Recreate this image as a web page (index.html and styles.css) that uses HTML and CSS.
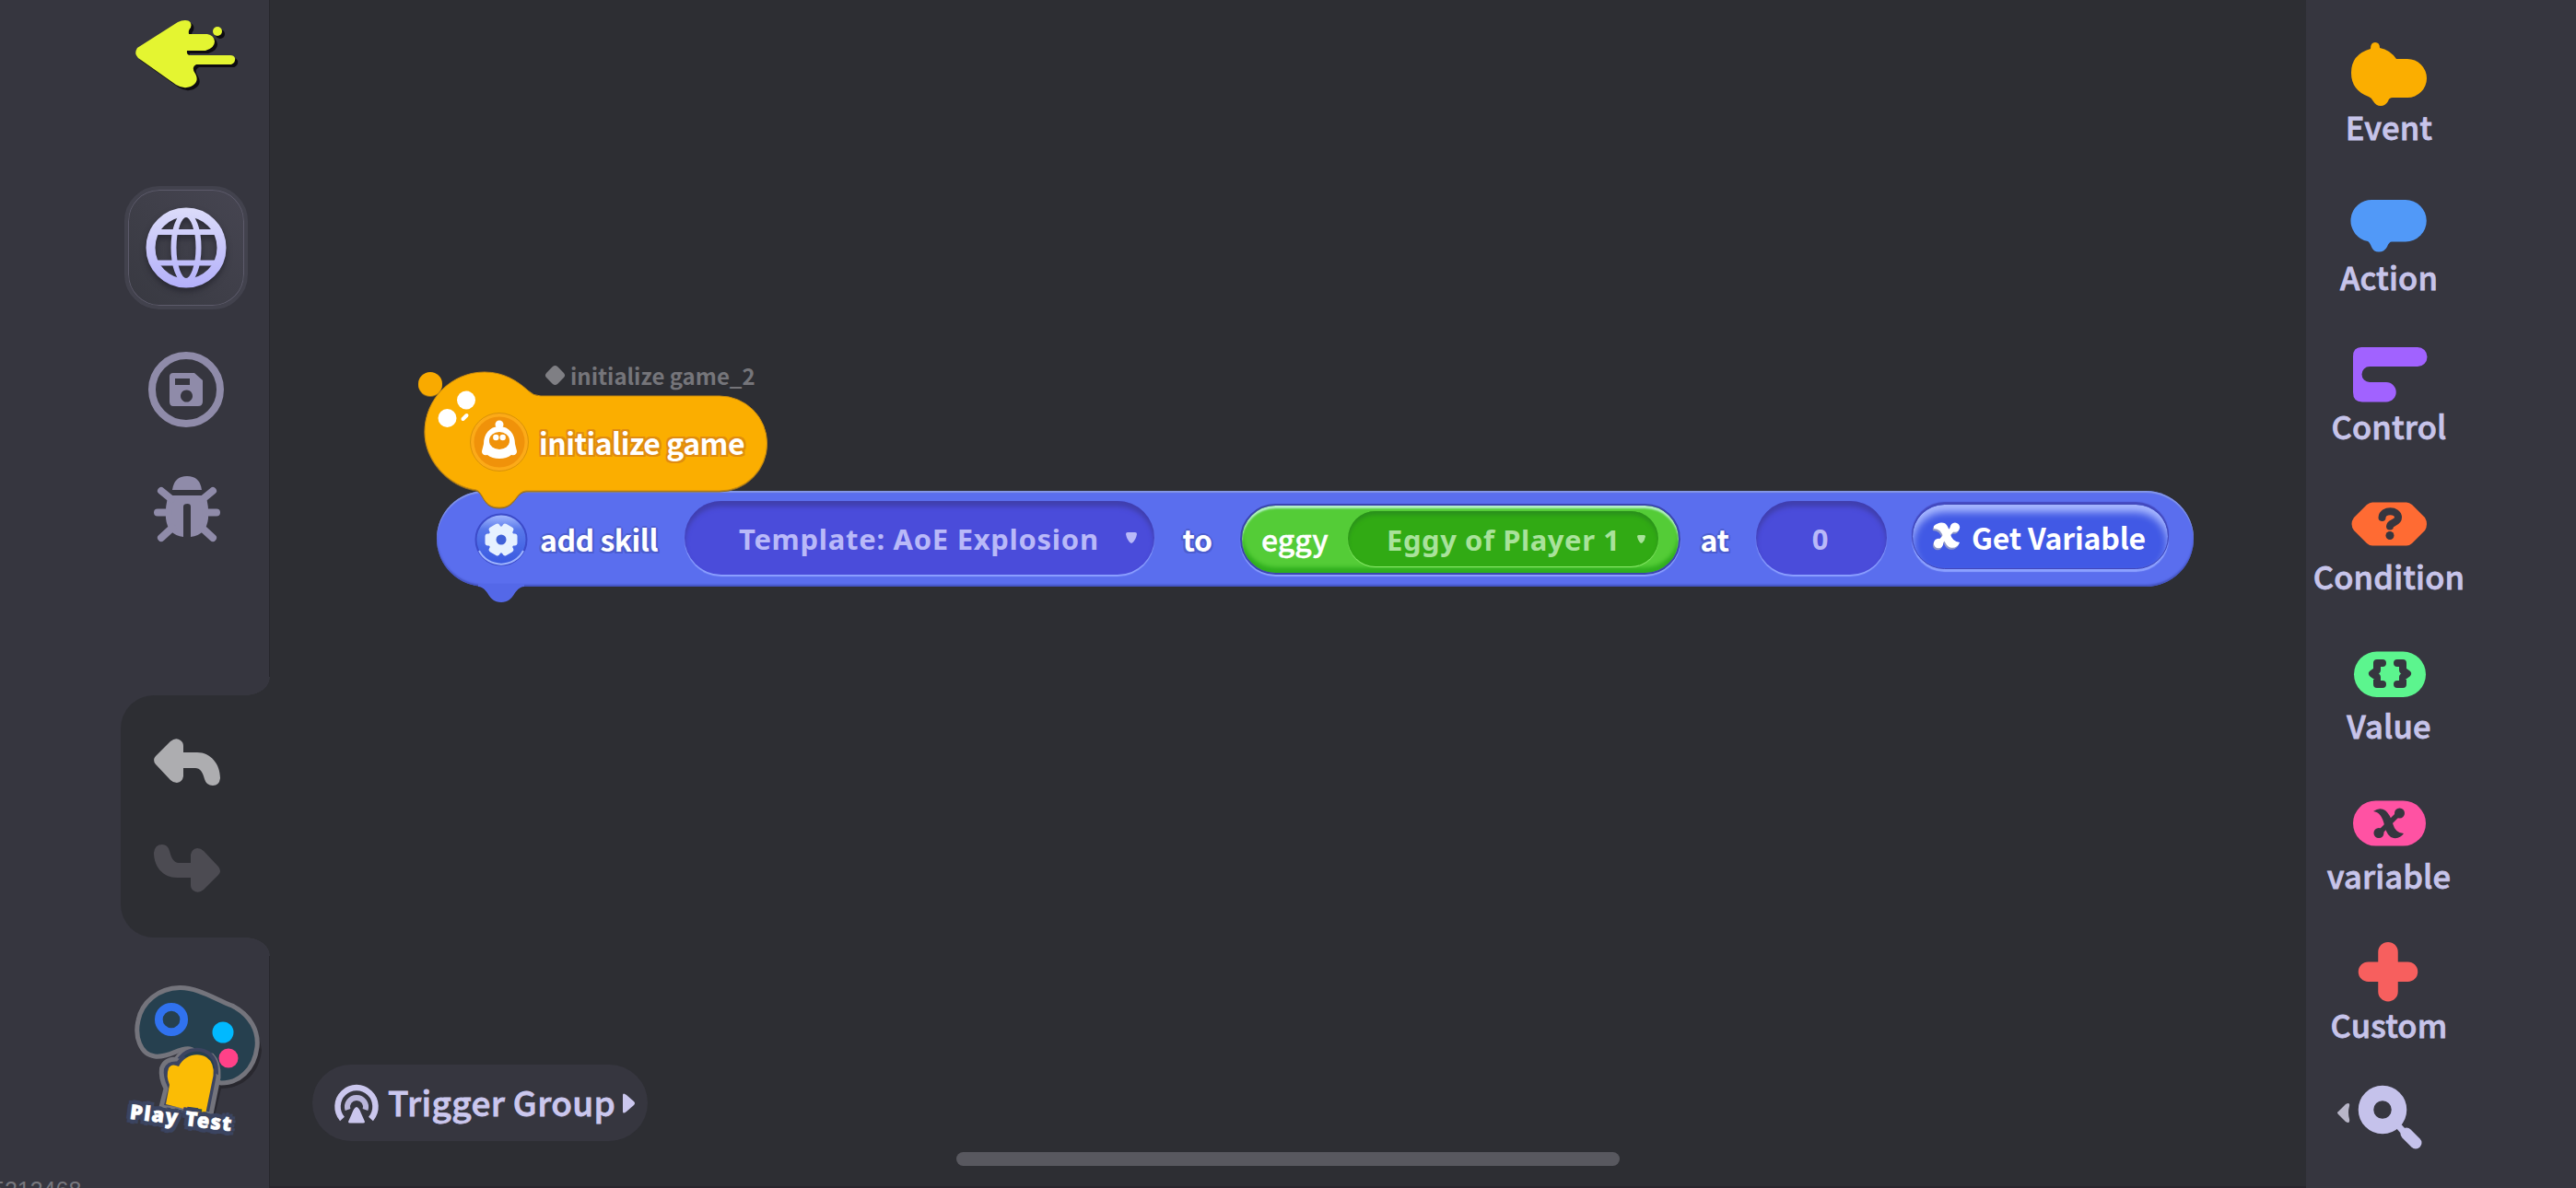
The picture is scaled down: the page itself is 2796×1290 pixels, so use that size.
FILE: index.html
```html
<!DOCTYPE html>
<html lang="en">
<head>
    <meta charset="UTF-8">
    <meta name="viewport" content="width=device-width, initial-scale=1.0">
    <title>Trigger Editor</title>
    <link rel="stylesheet" href="styles.css">
</head>
<body>
    <div class="editor">
        <aside class="left-bar">
            <svg class="back" viewBox="0 0 112 80">
                <g fill="#0d0b10" transform="translate(3 3)">
                    <path d="M2 30 Q-2 36 3 41 L44 70 Q52 75 60 72 Q70 67 65 58 Q60 51 66 48 L104 48 Q109 46 108 41 Q107 38 103 38 L60 38 Q55 38 56 33 L76 33 Q86 30 86 23 Q85 16 78 15 L58 15 Q57 11 60 8 Q62 0 54 0 Q50 0 46 2 Z"/>
                    <circle cx="89" cy="12" r="5"/>
                </g>
                <path fill="#e4f531" d="M2 30 Q-2 36 3 41 L44 70 Q52 75 60 72 Q70 67 65 58 Q60 51 66 48 L104 48 Q109 46 108 41 Q107 38 103 38 L60 38 Q55 38 56 33 L76 33 Q86 30 86 23 Q85 16 78 15 L58 15 Q57 11 60 8 Q62 0 54 0 Q50 0 46 2 Z"/>
                <circle cx="89" cy="12" r="5" fill="#e4f531"/>
            </svg>

            <div class="globe-btn">
                <svg class="globe" viewBox="0 0 88 88">
                    <defs>
                        <linearGradient id="globeFill" gradientUnits="userSpaceOnUse" x1="0" y1="0" x2="0" y2="88">
                            <stop offset="0" stop-color="#dcdcfa"/>
                            <stop offset="1" stop-color="#b3b0fa"/>
                        </linearGradient>
                    </defs>
                    <g fill="none" stroke="url(#globeFill)">
                        <circle cx="44" cy="44" r="38.500" stroke-width="10"/>
                        <ellipse cx="44" cy="44" rx="13.500" ry="36" stroke-width="6"/>
                        <path d="M12 27 H76 M12 60.500 H76" stroke-width="6"/>
                    </g>
                </svg>
            </div>

            <svg class="save" viewBox="0 0 84 84">
                <circle cx="42" cy="42" r="37" fill="none" stroke="#8f8ba9" stroke-width="8"/>
                <path fill="#8f8ba9" fill-rule="evenodd" d="M28 24 H51 L60 32 V55 Q60 60 55 60 H28 Q24 60 24 55 V28 Q24 24 28 24 Z M30 30 V37 H46 V30 Z M42.500 42.500 a6.500 6.500 0 1 0 0.010 0 Z"/>
            </svg>

            <svg class="bug" viewBox="0 0 72 72">
                <g fill="#8f8ba9">
                    <path d="M20 15 Q22 0 36 0 Q50 0 52 15 Z"/>
                    <path d="M16 21 H56 Q60 32 59 46 Q57 64 40 66 V33 Q40 30 36.500 30 Q32 30 32 33 V66 Q15 64 13 46 Q12 32 16 21 Z"/>
                </g>
                <path fill="none" stroke="#8f8ba9" stroke-width="8" stroke-linecap="round" d="M8 16 L19 25 M64 16 L53 25 M4 39.500 H16 M68 39.500 H56 M8 67 L20 56 M64 67 L52 56"/>
            </svg>

            <div class="history">
                <svg class="undo" viewBox="0 0 72 52">
                    <path fill="#adadb0" d="M2 19 L18 3 Q24 -2 29 2 Q32 4 32 8 V15 H47 C62 15 72 28 72 43 Q71 51 64 51 Q57 51 55 44 C53 36 50 32 45 32 H32 V41 Q31 47 25 48 Q21 48 18 45 L2 28 Q-2 23 2 19 Z"/>
                </svg>
                <svg class="redo" viewBox="0 0 72 52">
                    <path fill="#4c4b52" d="M70 33 L54 49 Q48 54 43 50 Q40 48 40 44 V36 H25 C10 36 0 24 0 9 Q1 0 9 0 Q15 0 17 7 C19 15 22 20 27 20 H40 V11 Q41 5 47 4 Q51 4 54 7 L70 24 Q74 29 70 33 Z"/>
                </svg>
            </div>

            <div class="play-test">
                <svg viewBox="0 0 150 160">
                    <path fill="#29282f" d="M106 112 C130 112 148 95 150 70 L146 50 L100 100 L92 146 L98 146 Z"/>
                    <path fill="#26404f" stroke="#74747c" stroke-width="5" d="M61 2.500 C80 2 100 15 118 22 C138 32 147 50 145 67 C142 92 125 106 106 106 C96 104 86 72 72 69 C60 67 50 79 34 77 C18 75 12 55 16 38 C20 18 38 3 61 2.500 Z"/>
                    <path fill="#3b4460" stroke="#74747c" stroke-width="5" d="M41 132 L46 112 Q40 100 41.500 90 Q45 80 57 80 Q61 75 66 72 L96 76 Q104 84 103 100 L95 140 Z"/>
                    <path fill="#26404f" stroke="#3b4460" stroke-width="4" d="M62 78 C70 68 86 67 95 76 Q101 82 101 94 L90 88 Z"/>
                    <path fill="#fbbc05" d="M46 129 L50 108 Q46 98 49 90 Q52 84 60 88 C66 76 80 72 90 78 Q99 84 97.500 98 L89 140 Z"/>
                    <circle cx="52" cy="37" r="13.700" fill="none" stroke="#3072ef" stroke-width="8.700"/>
                    <circle cx="108" cy="51" r="11.500" fill="#00b9ff"/>
                    <circle cx="114" cy="79" r="10.500" fill="#ff4188"/>
                </svg>
                <span class="play-label">Play Test</span>
            </div>

            <span class="uid">5213468</span>
        </aside>

        <main class="canvas">
            <!-- Event block -->
            <div class="node event-node">
                <svg class="event-shape" viewBox="0 0 382 156">
                    <circle cx="14" cy="17" r="13" fill="#f9aa00"/>
                    <path fill="#fbae00" stroke="#c98a10" stroke-width="1" d="M73 4 C94 4 109 14 120 24 Q126 30 134 30 H328 A51.500 51.500 0 0 1 328 133 H118 C106 134 107 151 89 151 C71 151 73 136 64 132 C34 128 8 100 8 69 C8 33 37 4 73 4 Z"/>
                    <circle cx="53" cy="34.500" r="10" fill="#fff"/>
                    <circle cx="32.500" cy="54" r="10" fill="#fff"/>
                    <path d="M49.500 55 L53.500 51" stroke="#fff" stroke-width="4" stroke-linecap="round"/>
                    <circle cx="89" cy="80" r="31.500" fill="#fcaa18" stroke="#d99208" stroke-width="1"/>
                    <circle cx="89" cy="80" r="27.500" fill="#f0920a"/>
                    <g fill="#fff">
                        <circle cx="89" cy="61" r="4.500"/>
                        <path d="M89 63 C100 63 106 72 106 82 Q107 86 108 90 Q108 95 102 94 Q97 98 89 98 Q81 98 76 94 Q70 95 70 90 Q71 86 72 82 C72 72 78 63 89 63 Z"/>
                    </g>
                    <ellipse cx="89" cy="78.500" rx="11" ry="9.500" fill="#f0920a"/>
                    <circle cx="85.300" cy="75" r="3.200" fill="#fff"/>
                    <circle cx="92.700" cy="75" r="3.200" fill="#fff"/>
                </svg>
                <div class="node-caption"><i class="diamond"></i>initialize game_2</div>
                <div class="event-title">initialize game</div>
            </div>

            <!-- Action block -->
            <div class="node action-node">
                <svg class="tab" viewBox="0 0 50 22">
                    <path fill="#5468e8" d="M0 0 H50 V3 C38 4 40 20 25 20 C10 20 12 4 0 3 Z"/>
                </svg>
                <svg class="gear" viewBox="0 0 58 58">
                    <defs>
                        <linearGradient id="gearFill" x1="0" y1="0" x2="0" y2="1">
                            <stop offset="0" stop-color="#a6bbff"/>
                            <stop offset=".3" stop-color="#5878ea"/>
                            <stop offset="1" stop-color="#3858e0"/>
                        </linearGradient>
                    </defs>
                    <circle cx="29" cy="29" r="27.500" fill="url(#gearFill)" stroke="#3c4bc9" stroke-width="2"/>
                    <path d="M5 41 A27 27 0 0 0 53 41" fill="none" stroke="#9db4ff" stroke-width="2"/>
                    <g fill="#e6f1ff">
                        <circle cx="29" cy="29" r="14.500"/>
                        <rect x="22.500" y="11.500" width="13" height="35" rx="3" transform="rotate(30 29 29)"/>
                        <rect x="22.500" y="11.500" width="13" height="35" rx="3" transform="rotate(90 29 29)"/>
                        <rect x="22.500" y="11.500" width="13" height="35" rx="3" transform="rotate(150 29 29)"/>
                    </g>
                    <circle cx="29" cy="29" r="5.500" fill="#3f60d8"/>
                </svg>
                <span class="word add-skill">add skill</span>
                <div class="slot template">
                    <span>Template: AoE Explosion</span>
                    <svg class="caret" viewBox="0 0 12 12"><path d="M2 0 H10 Q12 0 12 2 Q11 8 7 11.500 Q6 12 5 11.500 Q1 8 0 2 Q0 0 2 0 Z"/></svg>
                </div>
                <span class="word to">to</span>
                <div class="eggy">
                    <span class="eggy-name">eggy</span>
                    <div class="eggy-slot">
                        <span>Eggy of Player 1</span>
                        <svg class="caret" viewBox="0 0 12 12"><path d="M2 0 H10 Q12 0 12 2 Q11 8 7 11.500 Q6 12 5 11.500 Q1 8 0 2 Q0 0 2 0 Z"/></svg>
                    </div>
                </div>
                <span class="word at">at</span>
                <div class="slot number">0</div>
                <div class="get-variable">
                    <svg class="x-icon" viewBox="0 0 34 32">
                        <path fill="#fff" d="M2 5 Q9 -1 15 2 Q19 5 21 14 Q23 23 32 24 Q29 31 22 30 Q16 29 13 19 Q11 8 2 8 Z"/>
                        <path d="M26 6 L8 25" stroke="#fff" stroke-width="6"/>
                        <circle cx="26.500" cy="6.500" r="5.500" fill="#fff"/>
                        <circle cx="7.500" cy="25" r="5.500" fill="#fff"/>
                    </svg>
                    <span>Get Variable</span>
                </div>
            </div>

            <button class="trigger-group">
                <svg class="signal" viewBox="0 0 48 44">
                    <path d="M8.500 39 A20.500 20.500 0 1 1 39.500 39" fill="none" stroke="#cbc7ee" stroke-width="6.500"/>
                    <path d="M14.500 29 A10 10 0 1 1 33.500 29" fill="none" stroke="#b9b5da" stroke-width="6"/>
                    <path d="M24 26 Q27 27 29 33 L33 42 Q33 43.500 31 43.500 H17 Q15 43.500 15 42 L19 33 Q21 27 24 26 Z" fill="#cbc7ee"/>
                </svg>
                <span>Trigger Group</span>
                <svg class="more" viewBox="0 0 13 22"><path fill="#cbc7ee" d="M0 2 Q0 -1 4 2 L12 9 Q14 11 12 13 L4 20 Q0 23 0 20 Z"/></svg>
            </button>

            <div class="home-bar"></div>
        </main>

        <nav class="right-bar">
            <div class="category">
                <svg viewBox="0 0 100 80"><path fill="#fbae00" d="M30 13 Q30 6 35 6 Q40 6 40 12 Q51 14 58 24 H70 A21 21 0 0 1 70 66 H54 Q50 66 49 70 Q46 75 41 75 Q36 75 33 70 Q31 66 28 65 Q9 58 9 39 Q9 19 30 13 Z"/></svg>
                <span>Event</span>
            </div>
            <div class="category">
                <svg viewBox="0 0 100 80"><path fill="#5199f8" d="M32 14 H68 A22.700 22.700 0 0 1 68 59.500 H53 Q50 59.500 48 65 Q45 70.500 39 70.500 Q33 70.500 31 65 Q29 60 27 59 A22.700 22.700 0 0 1 32 14 Z"/></svg>
                <span>Action</span>
            </div>
            <div class="category">
                <svg viewBox="0 0 100 80"><path fill="#a162ff" d="M20 12 H81 A10.500 10.500 0 0 1 81 33 H29 A8.500 8.500 0 0 0 29 50 H47 A10.700 10.700 0 0 1 47 71.500 H21 Q11 71.500 11 61 V22 Q11 12 20 12 Z"/></svg>
                <span>Control</span>
            </div>
            <div class="category">
                <svg viewBox="0 0 100 80">
                    <path fill="#ff6b33" d="M32 17.500 H69 Q72 17.500 75 20 L89 34 Q93 41 89 48 L75 62 Q72 64.500 69 64.500 H32 Q29 64.500 26 62 L12 48 Q7 41 12 34 L26 20 Q29 17.500 32 17.500 Z"/>
                    <path fill="none" stroke="#36363f" stroke-width="8" stroke-linecap="round" d="M42.500 34 C43 25 60 25 60 34 C60 40 51 39 51 43.500"/>
                    <circle cx="51" cy="53.500" r="4.500" fill="#36363f"/>
                </svg>
                <span>Condition</span>
            </div>
            <div class="category">
                <svg viewBox="0 0 100 80">
                    <rect x="12" y="17.500" width="78" height="49.500" rx="24.700" fill="#5cf58e"/>
                    <path fill="none" stroke="#36363f" stroke-width="8" stroke-linecap="round" stroke-linejoin="round" d="M43 30 H37 V38 L32 41.500 L37 45 V53 H43 M59 30 H65 V38 L70 41.500 L65 45 V53 H59"/>
                </svg>
                <span>Value</span>
            </div>
            <div class="category">
                <svg viewBox="0 0 100 80">
                    <rect x="11" y="16.500" width="79" height="49" rx="24.500" fill="#ff52a3"/>
                    <path fill="#36363f" d="M33 28 Q40 23 46 27 Q51 31 54 41 Q57 52 66 52 Q62 58 55 57 Q48 56 45 43 Q42 29 33 28 Z"/>
                    <path stroke="#36363f" stroke-width="5.500" d="M60 31 L39 52"/>
                    <circle cx="61.500" cy="30" r="5.500" fill="#36363f"/>
                    <circle cx="39" cy="51.500" r="5.500" fill="#36363f"/>
                </svg>
                <span>variable</span>
            </div>
            <div class="category">
                <svg viewBox="0 0 100 80"><path stroke="#f75f5e" stroke-width="21.500" stroke-linecap="round" d="M49 18.700 V61.700 M27.500 40.200 H70.500"/></svg>
                <span>Custom</span>
            </div>
            <svg class="search" viewBox="0 0 100 80">
                <path fill="#b8b6c8" d="M1 28 L9 20 Q14 17 13 22 Q11 29 13 36 Q14 42 9 39 L1 31 Q-1 29 1 28 Z"/>
                <circle cx="49" cy="26" r="18" fill="none" stroke="#c5c2eb" stroke-width="16.500"/>
                <path stroke="#c5c2eb" stroke-width="7" d="M64 41 L72 50"/>
                <path stroke="#c5c2eb" stroke-width="13" stroke-linecap="round" d="M75 52 L85 62"/>
            </svg>
        </nav>
    </div>
</body>
</html>
```
FILE: styles.css
```css
* {
    box-sizing: border-box;
}
body {
    margin: 0;
    background-color: #2d2e33;
    font-family: "Noto Sans CJK SC", "Noto Sans", sans-serif;
    color: #fff;
}
svg {
    display: block;
    overflow: visible;
    flex: none;
}
.editor {
    display: grid;
    grid-template-columns: 293px 1fr 293px;
    width: 2796px;
    height: 1290px;
    overflow: hidden;
}

/* Left bar */
.left-bar {
    display: flex;
    flex-direction: column;
    height: 1290px;
    padding-top: 22px;
    background-color: #36363f;
    border-right: 1px solid #27272c;
    position: relative;
}
.back {
    width: 112px;
    height: 80px;
    margin-left: 147px;
}
.globe-btn {
    display: flex;
    align-items: center;
    justify-content: center;
    width: 134px;
    height: 134px;
    margin: 100px 0 0 135px;
    border: 4px solid #42424d;
    border-radius: 38px;
    background: linear-gradient(45deg, #383941, #464551);
    box-shadow: inset 0 0 0 1px #5c5a6a;
}
.globe {
    width: 88px;
    height: 88px;
    filter: drop-shadow(0 4px 3px rgba(20, 20, 30, 0.5));
}
.save {
    width: 84px;
    height: 84px;
    margin: 45px 0 0 160px;
}
.bug {
    width: 72px;
    height: 72px;
    margin: 52px 0 0 167px;
}
.history {
    display: flex;
    flex-direction: column;
    gap: 63px;
    width: 162px;
    height: 263px;
    margin: 166px 0 0 131px;
    padding: 47px 36px;
    background-color: #2d2e33;
    border-radius: 36px 0 0 36px;
    position: relative;
}
/* Inverted corners that melt the tray into the canvas */
.history::before,
.history::after {
    content: "";
    position: absolute;
    right: 0;
    width: 26px;
    height: 20px;
}
.history::before {
    bottom: 100%;
    background: radial-gradient(ellipse 26px 20px at 0 0, #36363f 98%, #2d2e33 100%);
}
.history::after {
    top: 100%;
    background: radial-gradient(ellipse 26px 20px at 0 100%, #36363f 98%, #2d2e33 100%);
}
.undo,
.redo {
    width: 72px;
    height: 52px;
}
.play-test {
    width: 150px;
    height: 170px;
    margin: 52px 0 0 134px;
    position: relative;
}
.play-test svg {
    width: 150px;
    height: 160px;
}
.play-label {
    position: absolute;
    left: 7px;
    top: 127px;
    width: 118px;
    transform: rotate(7deg);
    font-family: "Noto Sans", sans-serif;
    font-size: 22px;
    font-weight: 900;
    line-height: 32px;
    letter-spacing: 1.3px;
    white-space: nowrap;
    -webkit-text-stroke: 0.6px #fff;
    text-shadow: 5px 0 #3b4460, -5px 0 #3b4460, 0 5px #3b4460, 0 -5px #3b4460, 4px 4px #3b4460, -4px 4px #3b4460, 4px -4px #3b4460, -4px -4px #3b4460;
}
.uid {
    position: absolute;
    left: -9px;
    top: 1278px;
    font-family: "Liberation Sans", sans-serif;
    font-size: 25px;
    line-height: 28px;
    color: #77777d;
}

/* Canvas */
.canvas {
    position: relative;
    border-bottom: 2px solid #28262d;
}
.node {
    position: absolute;
}
.event-node {
    left: 161px;
    top: 400px;
    width: 382px;
    height: 156px;
    z-index: 1;
}
.event-shape {
    position: absolute;
    left: -1px;
    top: 0;
    width: 382px;
    height: 156px;
    filter: drop-shadow(0 1px 0 #8c6a20);
}
.node-caption {
    display: flex;
    align-items: center;
    gap: 8px;
    margin: 0 0 0 138px;
    height: 14px;
    position: relative;
    font-size: 24px;
    font-weight: 700;
    white-space: nowrap;
    color: #75757a;
}
.diamond {
    width: 17px;
    height: 17px;
    margin: 0 0 0 2px;
    border-radius: 4px;
    background-color: #7f7f84;
    transform: rotate(45deg);
    flex: none;
}
.event-title {
    position: relative;
    margin: 42px 0 0 131px;
    font-size: 32px;
    font-weight: 700;
    line-height: 48px;
    letter-spacing: -0.5px;
    white-space: nowrap;
    text-shadow: 2px 0 #e08c10, -2px 0 #e08c10, 0 2px #e08c10, 0 -2px #e08c10, 2px 2px #e08c10, -2px 2px #e08c10, 2px -2px #e08c10, -2px -2px #e08c10;
}
.action-node {
    display: flex;
    align-items: center;
    left: 181px;
    top: 533px;
    width: 1907px;
    height: 104px;
    padding-left: 41px;
    border-radius: 52px;
    background-color: #5a6eee;
    box-shadow: inset 0 2px 1px #8496e6, inset 0 -2px 2px #4352bd;
}
.tab {
    position: absolute;
    left: 45px;
    top: 101px;
    width: 50px;
    height: 22px;
}
.gear {
    width: 58px;
    height: 58px;
    margin-top: 2px;
}
.word {
    font-size: 32px;
    font-weight: 700;
    line-height: 48px;
    letter-spacing: -0.5px;
    text-align: center;
    white-space: nowrap;
    text-shadow: 2px 0 #4c5dcf, -2px 0 #4c5dcf, 0 2px #4c5dcf, 0 -2px #4c5dcf, 2px 2px #4c5dcf, -2px 2px #4c5dcf;
}
.add-skill {
    width: 154px;
    margin-right: 16px;
}
.to {
    width: 93px;
}
.at {
    width: 74px;
    margin-right: 8px;
}
.slot {
    display: flex;
    align-items: center;
    height: 80px;
    margin-top: -2px;
    border-radius: 40px;
    background-color: #4a4cda;
    box-shadow: inset 0 6px 5px #403fae, 0 2px 1px #8ca0ff;
    font-family: "Noto Sans", sans-serif;
    font-size: 31px;
    font-weight: 700;
    color: #b9b9f8;
    white-space: nowrap;
}
.caret {
    fill: currentColor;
}
.template {
    width: 510px;
    padding: 2px 0 0 59px;
}
.template span {
    width: 420px;
    letter-spacing: 0.7px;
}
.template .caret {
    width: 12px;
    height: 12px;
    margin-top: -3px;
}
.eggy {
    display: flex;
    align-items: center;
    width: 478px;
    height: 77px;
    padding-left: 21px;
    border-radius: 39px;
    border: 2px solid #3b45b0;
    background-color: #54cc37;
    box-shadow: inset 0 3px 2px #b5f0c8, inset 0 -6px 4px #2fae1e, 0 2px 1px #8ca0ff;
}
.eggy-name {
    width: 94px;
    font-size: 32px;
    font-weight: 500;
    line-height: 48px;
    -webkit-text-stroke: 0.4px #fff;
}
.eggy-slot {
    display: flex;
    align-items: center;
    width: 337px;
    height: 60px;
    padding-left: 42px;
    border-radius: 30px;
    background-color: #31aa14;
    box-shadow: inset 0 4px 4px #2a901c, 0 1px 1px #90ee70;
    font-family: "Noto Sans", sans-serif;
    font-size: 31px;
    font-weight: 700;
    color: #a9e29b;
    white-space: nowrap;
}
.eggy-slot span {
    width: 272px;
    padding-top: 1px;
    letter-spacing: 0.55px;
}
.eggy-slot .caret {
    width: 9px;
    height: 9px;
}
.number {
    justify-content: center;
    width: 142px;
    padding: 2px 3px 0 0;
}
.get-variable {
    display: flex;
    align-items: center;
    gap: 11px;
    width: 279px;
    height: 71px;
    margin: -5px 0 0 27px;
    padding-left: 21px;
    border-radius: 36px;
    background-color: #4159e5;
    border: 1px solid #4248b8;
    box-shadow: inset 0 8px 8px #a9b9ff, 0 -2px 1px #4449c0, 0 3px 1px #8ba0ff;
    font-size: 32px;
    font-weight: 700;
    line-height: 48px;
    letter-spacing: -0.2px;
    white-space: nowrap;
}
.x-icon {
    width: 32px;
    height: 31px;
    margin-top: -3px;
    filter: drop-shadow(-1px 2px 0 #8f98c8);
}
.trigger-group {
    position: absolute;
    left: 46px;
    top: 1156px;
    display: flex;
    align-items: center;
    width: 364px;
    height: 83px;
    padding: 0 0 0 24px;
    border: none;
    border-radius: 42px;
    background-color: #36363f;
    font-family: inherit;
    font-size: 37px;
    font-weight: 500;
    line-height: 48px;
    color: #cbc7ee;
    white-space: nowrap;
}
.signal {
    width: 48px;
    height: 44px;
    margin-right: 10px;
}
.trigger-group span {
    width: 255px;
    margin-top: -3px;
    text-align: left;
    letter-spacing: 0.35px;
    -webkit-text-stroke: 0.8px #cbc7ee;
}
.more {
    width: 13px;
    height: 22px;
}
.home-bar {
    position: absolute;
    left: 745px;
    top: 1251px;
    width: 720px;
    height: 15px;
    border-radius: 8px;
    background-color: #58585f;
}

/* Right bar */
.right-bar {
    display: flex;
    flex-direction: column;
    height: 1290px;
    padding-top: 40px;
    background-color: #36363f;
}
.category {
    display: flex;
    flex-direction: column;
    align-items: center;
    width: 180px;
    height: 162.5px;
    flex: none;
}
.category svg {
    width: 100px;
    height: 80px;
}
.category span {
    margin-top: -3px;
    font-size: 34.5px;
    font-weight: 500;
    line-height: 40px;
    letter-spacing: 0.15px;
    color: #c7c4ea;
    white-space: nowrap;
    -webkit-text-stroke: 0.8px #c7c4ea;
}
.search {
    width: 100px;
    height: 80px;
    margin: 1.5px 0 0 34px;
}
```
